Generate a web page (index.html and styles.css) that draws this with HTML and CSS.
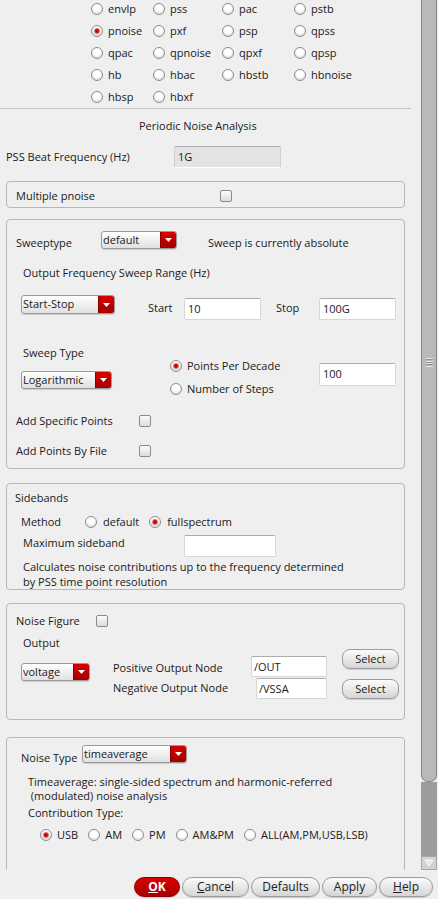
FILE: index.html
```html
<!DOCTYPE html>
<html>
<head>
<meta charset="utf-8">
<link rel="stylesheet" href="styles.css">
</head>
<body>
<div class="window">
  <div class="main">
    <div class="viewport">
      <div class="analyses">
        <label class="opt"><span class="radio"></span>envlp</label>
        <label class="opt"><span class="radio"></span>pss</label>
        <label class="opt"><span class="radio"></span>pac</label>
        <label class="opt"><span class="radio"></span>pstb</label>
        <label class="opt"><span class="radio on"></span>pnoise</label>
        <label class="opt"><span class="radio"></span>pxf</label>
        <label class="opt"><span class="radio"></span>psp</label>
        <label class="opt"><span class="radio"></span>qpss</label>
        <label class="opt"><span class="radio"></span>qpac</label>
        <label class="opt"><span class="radio"></span>qpnoise</label>
        <label class="opt"><span class="radio"></span>qpxf</label>
        <label class="opt"><span class="radio"></span>qpsp</label>
        <label class="opt"><span class="radio"></span>hb</label>
        <label class="opt"><span class="radio"></span>hbac</label>
        <label class="opt"><span class="radio"></span>hbstb</label>
        <label class="opt"><span class="radio"></span>hbnoise</label>
        <label class="opt"><span class="radio"></span>hbsp</label>
        <label class="opt"><span class="radio"></span>hbxf</label>
      </div>
      <div class="sep"></div>
      <div class="title">Periodic Noise Analysis</div>
      <div class="pss-row">
        <span class="pss-label">PSS Beat Frequency (Hz)</span>
        <span class="input disabled pss-input">1G</span>
      </div>

      <div class="group g-multi">
        <div class="multi-row">
          <span class="multi-label">Multiple pnoise</span>
          <span class="check"></span>
        </div>
      </div>

      <div class="group g-sweep">
        <div class="row row-a">
          <span class="sweeptype-label">Sweeptype</span>
          <span class="combo combo-default"><span class="val">default</span><span class="cbtn"><svg width="7" height="4" viewBox="0 0 7 4"><path d="M0 0H7L3.5 4Z" fill="#fff"/></svg></span></span>
          <span class="abs-label">Sweep is currently absolute</span>
        </div>
        <div class="row-b">Output Frequency Sweep Range (Hz)</div>
        <div class="row row-c">
          <span class="combo combo-startstop"><span class="val">Start-Stop</span><span class="cbtn"><svg width="7" height="4" viewBox="0 0 7 4"><path d="M0 0H7L3.5 4Z" fill="#fff"/></svg></span></span>
          <span class="start-label">Start</span>
          <span class="input range-input">10</span>
          <span class="stop-label">Stop</span>
          <span class="input range-input">100G</span>
        </div>
        <div class="row row-d">
          <div class="d-left">
            <div class="d-left-label">Sweep Type</div>
            <span class="combo combo-log"><span class="val">Logarithmic</span><span class="cbtn"><svg width="7" height="4" viewBox="0 0 7 4"><path d="M0 0H7L3.5 4Z" fill="#fff"/></svg></span></span>
          </div>
          <div class="d-mid">
            <label class="opt d-opt"><span class="radio on"></span>Points Per Decade</label>
            <label class="opt d-opt"><span class="radio"></span>Number of Steps</label>
          </div>
          <span class="input steps-input">100</span>
        </div>
        <div class="row row-e">
          <span class="chk-label">Add Specific Points</span>
          <span class="check"></span>
        </div>
        <div class="row row-f">
          <span class="chk-label">Add Points By File</span>
          <span class="check"></span>
        </div>
      </div>

      <div class="group g-side">
        <div class="side-title">Sidebands</div>
        <div class="row method-row">
          <span class="method-label">Method</span>
          <label class="opt m-opt"><span class="radio"></span>default</label>
          <label class="opt m-opt m-opt2"><span class="radio on"></span>fullspectrum</label>
        </div>
        <div class="row maxsb-row">
          <span class="maxsb-label">Maximum sideband</span>
          <span class="input maxsb-input"></span>
        </div>
        <div class="side-note">Calculates noise contributions up to the frequency determined<br>by PSS time point resolution</div>
      </div>

      <div class="group g-nf">
        <div class="row nf-row">
          <span class="nf-label">Noise Figure</span>
          <span class="check"></span>
        </div>
        <div class="row out-row">
          <div class="out-left">
            <div class="out-label">Output</div>
            <span class="combo combo-voltage"><span class="val">voltage</span><span class="cbtn"><svg width="7" height="4" viewBox="0 0 7 4"><path d="M0 0H7L3.5 4Z" fill="#fff"/></svg></span></span>
          </div>
          <div class="out-labels">
            <div class="pos-label">Positive Output Node</div>
            <div class="neg-label">Negative Output Node</div>
          </div>
          <div class="out-inputs">
            <span class="input node-input pos-input">/OUT</span>
            <span class="input node-input neg-input">/VSSA</span>
          </div>
          <div class="out-btns">
            <span class="btn select-btn sel1">Select</span>
            <span class="btn select-btn sel2">Select</span>
          </div>
        </div>
      </div>

      <div class="group g-type">
        <div class="row type-row">
          <span class="type-label">Noise Type</span>
          <span class="combo combo-type"><span class="val">timeaverage</span><span class="cbtn"><svg width="7" height="4" viewBox="0 0 7 4"><path d="M0 0H7L3.5 4Z" fill="#fff"/></svg></span></span>
        </div>
        <div class="type-note">Timeaverage: single-sided spectrum and harmonic-referred<br>&nbsp;(modulated) noise analysis</div>
        <div class="contrib-label">Contribution Type:</div>
        <div class="row contrib-row">
          <label class="opt c-opt"><span class="radio on"></span>USB</label>
          <label class="opt c-opt"><span class="radio"></span>AM</label>
          <label class="opt c-opt"><span class="radio"></span>PM</label>
          <label class="opt c-opt"><span class="radio"></span>AM&amp;PM</label>
          <label class="opt c-opt"><span class="radio"></span>ALL(AM,PM,USB,LSB)</label>
        </div>
      </div>
    </div>
    <div class="scrollbar">
      <div class="thumb"><div class="grip"></div></div>
      <div class="track"></div>
      <div class="arrow-btn"><svg width="10" height="8" viewBox="0 0 10 8"><path d="M1 1H9L5 7Z" fill="#e4e4e4" stroke="#ffffff" stroke-width="1"/></svg></div>
    </div>
  </div>
  <div class="buttons">
    <span class="btn dlg-btn ok"><u>O</u>K</span>
    <span class="btn dlg-btn cancel"><u>C</u>ancel</span>
    <span class="btn dlg-btn defaults">Defaults</span>
    <span class="btn dlg-btn apply">Apply</span>
    <span class="btn dlg-btn help"><u>H</u>elp</span>
  </div>
</div>
</body>
</html>
```

FILE: styles.css
```css
* { box-sizing: border-box; }
body {
  margin: 0;
  background: #efefef;
  font-family: "Open Sans", "Noto Sans", sans-serif;
  font-size: 11px;
  line-height: 16px;
  color: #202020;
}
.window { width: 438px; height: 899px; display: flex; flex-direction: column; overflow: hidden; }
.main { display: flex; height: 870px; }
.viewport { width: 421px; height: 870px; overflow: hidden; }

/* scrollbar */
.scrollbar { width: 16px; height: 870px; display: flex; flex-direction: column; }
.thumb {
  height: 782px;
  background: #b9b9b9;
  border: 1px solid #868686;
  border-top: none;
  border-radius: 0 0 7px 7px;
  padding-top: 358px;
}
.grip {
  width: 7px; height: 9px; margin-left: 4px;
  background: repeating-linear-gradient(#e6e6e6 0 1px, #8f8f8f 1px 2px, #b9b9b9 2px 2.5px);
}
.track { flex: 1; background: #9c9c9c; }
.arrow-btn {
  height: 14px; background: #d2d2d2; border: 1px solid #a5a5a5;
  display: flex; align-items: center; justify-content: center;
}

/* common widgets */
.opt { display: flex; align-items: center; gap: 5px; white-space: nowrap; }
.radio {
  width: 12px; height: 12px; flex: none; border-radius: 50%;
  border: 1px solid #8d8d8d;
  background: radial-gradient(circle at 50% 35%, #ffffff 0 40%, #e2e2e2 75%, #c8c8c8 100%);
  position: relative;
}
.radio.on::after {
  content: ""; position: absolute; left: 3px; top: 3px; width: 4px; height: 4px;
  border-radius: 50%; background: #d40000; box-shadow: 0 0 1px 1px rgba(170, 0, 0, 0.55);
}
.check {
  width: 12px; height: 12px; flex: none;
  border: 1px solid #8a8a8a; border-radius: 2px;
  background: linear-gradient(#fcfcfc, #dcdcdc);
}
.combo {
  display: flex; height: 18px; flex: none;
  border: 1px solid #9a9a9a; border-radius: 3px; overflow: hidden;
  background: linear-gradient(#ffffff, #e0e0e0);
  box-shadow: 0 1px 1px rgba(0, 0, 0, 0.15);
}
.combo .val { flex: 1; padding-left: 1px; line-height: 15px; white-space: nowrap; }
.combo .cbtn {
  width: 16px; flex: none;
  background: linear-gradient(#d80000, #a30000);
  border-left: 1px solid #8a0000;
  display: flex; align-items: center; justify-content: center;
}
.input {
  display: block; flex: none; height: 22px;
  background: #fff; border: 1px solid #d6d6d6; border-top-color: #adadad;
  border-radius: 2px; padding-left: 3px; line-height: 20px;
}
.input.disabled { background: #e3e3e3; border-color: #d0d0d0; border-top-color: #b0b0b0; border-bottom-color: #ffffff; }
.btn {
  display: block; flex: none; text-align: center;
  border: 1px solid #9b9b9b;
  background: linear-gradient(#fbfbfb, #d5d5d5);
  box-shadow: 0 1px 1px rgba(0, 0, 0, 0.15);
}
.row { display: flex; align-items: flex-start; }

/* top analysis radio grid */
.analyses {
  display: grid;
  grid-template-columns: 62px 69px 72px 80px;
  grid-auto-rows: 22px;
  padding-left: 91px;
  margin-top: -2px;
}
.sep { width: 411px; height: 1px; background: #c3c3c3; }
.title { margin-top: 9px; padding-left: 139px; }
.pss-row { display: flex; align-items: center; margin-top: 12px; height: 22px; padding-left: 6px; }
.pss-label { width: 168px; }
.pss-input { width: 107px; }

/* groups */
.group {
  margin-left: 6px; width: 399px;
  border: 1px solid #b7b7b7; border-radius: 4px;
}
.g-multi { margin-top: 13px; height: 27px; padding-left: 9px; }
.multi-row { display: flex; align-items: center; margin-top: 6px; height: 16px; }
.multi-label { width: 204px; }

.g-sweep { margin-top: 11px; height: 250px; padding-left: 9px; }
.row-a { margin-top: 11px; }
.sweeptype-label { width: 85px; margin-top: 4px; }
.combo-default { width: 76px; }
.abs-label { margin-left: 31px; margin-top: 4px; }
.row-b { margin-top: 14px; padding-left: 7px; }
.row-c { margin-top: 14px; margin-left: 5px; }
.combo-startstop { width: 94px; height: 19px; }
.start-label { margin-left: 33px; width: 36px; margin-top: 5px; }
.range-input { width: 77px; margin-top: 3px; }
.stop-label { margin-left: 15px; width: 43px; margin-top: 5px; }
.row-d { margin-top: 25px; margin-left: 5px; }
.d-left { width: 149px; }
.d-left-label { margin-left: 2px; }
.combo-log { width: 91px; margin-top: 10px; }
.d-mid { width: 149px; padding-top: 10px; display: flex; flex-direction: column; gap: 1px; }
.d-opt { height: 22px; }
.steps-input { width: 77px; height: 23px; margin-top: 18px; }
.row-e { margin-top: 13px; align-items: center; }
.row-f { margin-top: 14px; align-items: center; }
.chk-label { width: 123px; }

.g-side { margin-top: 14px; height: 107px; padding-left: 8px; }
.side-title { margin-top: 6px; }
.method-row { margin-top: 8px; margin-left: 6px; align-items: center; }
.method-label { width: 64px; }
.m-opt { gap: 6px; }
.m-opt2 { margin-left: 10px; }
.maxsb-row { margin-top: 5px; margin-left: 8px; }
.maxsb-label { width: 161px; line-height: 16px; }
.maxsb-input { width: 92px; }
.side-note { margin-top: 2px; margin-left: 8px; line-height: 15px; }

.g-nf { margin-top: 13px; height: 117px; padding-left: 9px; }
.nf-row { margin-top: 9px; align-items: center; }
.nf-label { width: 80px; }
.out-row { margin-top: 6px; margin-left: 5px; }
.out-left { width: 92px; }
.out-label { margin-left: 2px; }
.combo-voltage { width: 69px; margin-top: 12px; }
.out-labels { width: 138px; padding-top: 25px; }
.neg-label { margin-top: 4px; }
.out-inputs { width: 76px; display: flex; flex-direction: column; align-items: flex-end; }
.node-input { height: 21px; padding-left: 2px; line-height: 19px; }
.pos-input { width: 76px; margin-top: 21px; }
.neg-input { width: 71px; margin-top: 1px; }
.out-btns { margin-left: 15px; }
.select-btn { width: 57px; height: 20px; border-radius: 8px; line-height: 18px; }
.sel1 { margin-top: 14px; }
.sel2 { margin-top: 10px; }

.g-type { margin-top: 17px; height: 200px; padding-left: 14px; }
.type-row { margin-top: 7px; }
.type-label { width: 61px; margin-top: 5px; }
.combo-type { width: 105px; }
.type-note { margin-top: 9px; margin-left: 7px; line-height: 14px; }
.contrib-label { margin-top: 2px; margin-left: 7px; }
.contrib-row { margin-top: 6px; margin-left: 19px; align-items: center; gap: 10px; }

/* dialog buttons */
.buttons { height: 29px; display: flex; justify-content: flex-end; gap: 2px; padding: 7px 5px 0 0; }
.dlg-btn { height: 20px; border-radius: 10px; line-height: 18px; font-size: 12px; }
.ok { width: 46px; background: linear-gradient(#dc0000, #a60000); border-color: #8a0000; color: #fff; font-weight: bold; }
.cancel { width: 67px; }
.defaults { width: 69px; }
.apply { width: 55px; }
.help { width: 54px; }
```
